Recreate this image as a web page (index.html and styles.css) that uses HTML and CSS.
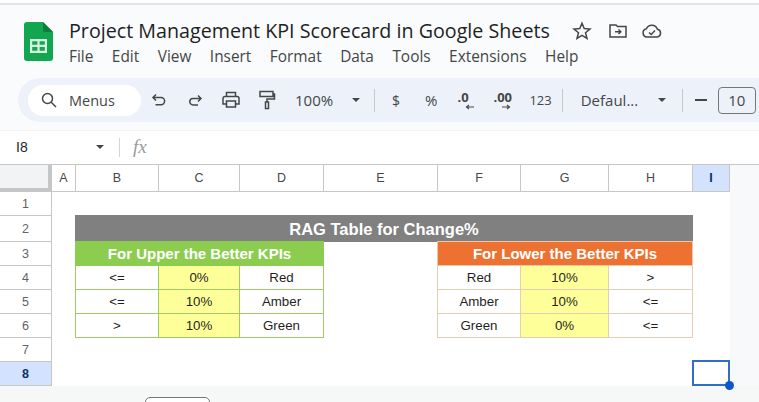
FILE: index.html
```html
<!DOCTYPE html>
<html lang="en">
  <head>
    <meta charset="UTF-8" />
    <meta name="viewport" content="width=device-width, initial-scale=1.0" />
    <title>Project Management KPI Scorecard in Google Sheets</title>
    <link rel="stylesheet" href="styles.css">
  </head>
  <body>
    <div class="app">
      <header class="top-bar">
        <svg class="logo" viewBox="0 0 29 39" width="29" height="39">
          <path d="M3 0H19L29 10V36A3 3 0 0 1 26 39H3A3 3 0 0 1 0 36V3A3 3 0 0 1 3 0Z" fill="#12a650" />
          <path d="M19 0L29 10H21A2 2 0 0 1 19 8Z" fill="#0c7d3c" />
          <path d="M6 17H23V31H6ZM8.2 19.2V22.8H13.4V19.2ZM15.6 19.2V22.8H20.8V19.2ZM8.2 25V28.8H13.4V25ZM15.6 25V28.8H20.8V25Z" fill="#d8f2e0" fill-rule="evenodd" />
        </svg>
        <div class="doc-info">
          <div class="title-row">
            <h1 class="doc-title">Project Management KPI Scorecard in Google Sheets</h1>
            <svg class="title-icon star-icon" viewBox="0 0 20 20" width="20" height="20">
              <path d="M10 2.2L12.2 7.6L18 8L13.5 11.7L15 17.4L10 14.3L5 17.4L6.5 11.7L2 8L7.8 7.6Z" />
            </svg>
            <svg class="title-icon move-icon" viewBox="0 0 20 20" width="20" height="20">
              <path d="M2 4H8L9.5 5.5H18V16H2Z" />
              <path d="M7 10.7H12.5M10.5 8.5L12.8 10.7L10.5 13" />
            </svg>
            <svg class="title-icon cloud-icon" viewBox="0 0 22 20" width="22" height="20">
              <path d="M6 16A4.2 4.2 0 0 1 5.4 7.7A6 6 0 0 1 16.4 8.2A4 4 0 0 1 16.5 16Z" />
              <path d="M8 11.5L10.2 13.5L14 9.6" />
            </svg>
          </div>
          <nav class="menu-row">
            <span>File</span>
            <span>Edit</span>
            <span>View</span>
            <span>Insert</span>
            <span>Format</span>
            <span>Data</span>
            <span>Tools</span>
            <span>Extensions</span>
            <span>Help</span>
          </nav>
        </div>
      </header>

      <div class="toolbar">
        <div class="search-pill">
          <svg class="tool-svg" viewBox="0 0 18 18" width="18" height="18">
            <circle cx="7.5" cy="7.5" r="5" />
            <path d="M11.2 11.2L16 16" />
          </svg>
          <span>Menus</span>
        </div>
        <div class="tool-btn">
          <svg class="tool-svg" viewBox="0 0 16 16" width="16" height="16">
            <path d="M5 2.5L2 5.5L5 8.5M2 5.5H10A3.6 3.6 0 0 1 10 12.7H4.5" />
          </svg>
        </div>
        <div class="tool-btn">
          <svg class="tool-svg" viewBox="0 0 16 16" width="16" height="16">
            <path d="M11 3.5L14 6.5L11 9.5M14 6.5H6A3.2 3.2 0 0 0 6 12.9H11" />
          </svg>
        </div>
        <div class="tool-btn">
          <svg class="tool-svg" viewBox="0 0 20 20" width="20" height="20">
            <path d="M5.5 6.5V2.5H14.5V6.5M5.5 14H2V8.5A2 2 0 0 1 4 6.5H16A2 2 0 0 1 18 8.5V14H14.5" />
            <path d="M5.5 11H14.5V17H5.5Z" />
          </svg>
        </div>
        <div class="tool-btn">
          <svg class="tool-svg" viewBox="0 0 20 20" width="20" height="20">
            <path d="M3 1.5H16V6.5H3ZM16 4H17.5V9H10V12" />
            <path d="M8.5 12H11.5V18.5H8.5Z" />
          </svg>
        </div>
        <span class="tool-text zoom-val">100%</span>
        <span class="caret zoom-caret"></span>
        <span class="tool-sep sep-first"></span>
        <span class="tool-text fmt dollar">$</span>
        <span class="tool-text percent">%</span>
        <span class="decimal dec-less">.0
          <svg class="dec-arrow" viewBox="0 0 10 6" width="10" height="6">
            <path d="M9 3H2M4 1L1.5 3L4 5" />
          </svg>
        </span>
        <span class="decimal dec-more">.00
          <svg class="dec-arrow" viewBox="0 0 10 6" width="10" height="6">
            <path d="M1 3H8M6 1L8.5 3L6 5" />
          </svg>
        </span>
        <span class="tool-text num-fmt">123</span>
        <span class="tool-sep sep-second"></span>
        <span class="tool-text font-name">Defaul...</span>
        <span class="caret font-caret"></span>
        <span class="tool-sep sep-third"></span>
        <span class="minus"></span>
        <span class="size-box">10</span>
      </div>

      <div class="formula-bar">
        <div class="name-box">I8</div>
        <span class="caret name-caret"></span>
        <span class="formula-sep"></span>
        <span class="fx">fx</span>
      </div>

      <div class="sheet-area">
        <div class="sheet">
          <div class="corner"></div>
          <div class="col-head">A</div>
          <div class="col-head">B</div>
          <div class="col-head">C</div>
          <div class="col-head">D</div>
          <div class="col-head">E</div>
          <div class="col-head">F</div>
          <div class="col-head">G</div>
          <div class="col-head">H</div>
          <div class="col-head col-active">I</div>

          <div class="row-head">1</div>
          <div class="blank wide"></div>

          <div class="row-head">2</div>
          <div class="blank"></div>
          <div class="rag-title">RAG Table for Change%</div>
          <div class="blank"></div>

          <div class="row-head">3</div>
          <div class="blank"></div>
          <div class="band band-green">For Upper the Better KPIs</div>
          <div class="blank"></div>
          <div class="band band-orange">For Lower the Better KPIs</div>
          <div class="blank"></div>

          <div class="row-head">4</div>
          <div class="blank"></div>
          <div class="cell g first">&lt;=</div>
          <div class="cell g y">0%</div>
          <div class="cell g">Red</div>
          <div class="blank"></div>
          <div class="cell o first">Red</div>
          <div class="cell o y">10%</div>
          <div class="cell o">&gt;</div>
          <div class="blank"></div>

          <div class="row-head">5</div>
          <div class="blank"></div>
          <div class="cell g first">&lt;=</div>
          <div class="cell g y">10%</div>
          <div class="cell g">Amber</div>
          <div class="blank"></div>
          <div class="cell o first">Amber</div>
          <div class="cell o y">10%</div>
          <div class="cell o">&lt;=</div>
          <div class="blank"></div>

          <div class="row-head">6</div>
          <div class="blank"></div>
          <div class="cell g first">&gt;</div>
          <div class="cell g y">10%</div>
          <div class="cell g">Green</div>
          <div class="blank"></div>
          <div class="cell o first">Green</div>
          <div class="cell o y">0%</div>
          <div class="cell o">&lt;=</div>
          <div class="blank"></div>

          <div class="row-head">7</div>
          <div class="blank wide"></div>

          <div class="row-head row-active">8</div>
          <div class="blank wide"></div>

          <div class="selection"><span class="handle"></span></div>
        </div>
      </div>

      <div class="bottom-bar">
        <div class="sheet-tab"></div>
      </div>
    </div>
  </body>
</html>
```

FILE: styles.css
```css
/* Sheets window */
* {
  box-sizing: border-box;
}

body {
  margin: 0;
  width: 759px;
  height: 402px;
  overflow: hidden;
  background: #f9fbfd;
  font-family: "Open Sans", Arial, sans-serif;
  color: #444746;
}

.app {
  display: flex;
  flex-direction: column;
  height: 402px;
  border-top: 3px solid #fff;
}

/* title and menus */
.top-bar {
  display: flex;
  height: 75px;
  padding: 14px 0 0 24px;
  border-top: 2px solid #e3e3e3;
}

.logo {
  flex: none;
  margin-top: 3px;
}

.doc-info {
  margin-left: 16px;
}

.title-row {
  display: flex;
  align-items: center;
  height: 24px;
}

.doc-title {
  flex: none;
  margin: 0;
  width: 481px;
  font-size: 19.7px;
  font-weight: 400;
  line-height: 24px;
  white-space: nowrap;
  color: #1f1f1f;
}

.title-icon {
  flex: none;
  fill: none;
  stroke: #444746;
  stroke-width: 1.5;
}

.star-icon {
  margin-left: 22px;
}

.move-icon {
  margin-left: 16px;
}

.cloud-icon {
  margin-left: 13px;
}

.menu-row {
  display: flex;
  gap: 18.5px;
  margin-top: 4px;
  font-size: 15.4px;
  line-height: 20px;
}

/* toolbar */
.toolbar {
  display: flex;
  align-items: center;
  flex: none;
  height: 44px;
  margin-left: 18px;
  padding-left: 10px;
  background: #edf2fa;
  border-radius: 22px 0 0 22px;
}

.search-pill {
  display: flex;
  align-items: center;
  gap: 11px;
  width: 113px;
  height: 31px;
  padding-left: 12px;
  background: #fff;
  border-radius: 16px;
  font-size: 14.5px;
}

.tool-svg {
  fill: none;
  stroke: #444746;
  stroke-width: 1.5;
}

.tool-btn {
  display: flex;
  align-items: center;
  justify-content: center;
  flex: none;
  width: 36px;
}

.tool-text {
  flex: none;
  font-size: 14px;
}

.zoom-val {
  width: 42px;
  margin-left: 10px;
  font-size: 15px;
}

.caret {
  flex: none;
  width: 0;
  height: 0;
  border-left: 4.5px solid transparent;
  border-right: 4.5px solid transparent;
  border-top: 4.5px solid #444746;
}

.zoom-caret {
  margin-left: 15px;
}

.tool-sep {
  flex: none;
  width: 1px;
  height: 23px;
  background: #c7c7c7;
}

.sep-first {
  margin-left: 14px;
}

.fmt {
  font-weight: 500;
}

.dollar {
  margin-left: 17px;
}

.percent {
  margin-left: 25px;
  font-size: 15px;
}

.decimal {
  position: relative;
  flex: none;
  width: 18px;
  margin-bottom: 6px;
  font-size: 13px;
  font-weight: 700;
  line-height: 14px;
}

.dec-less {
  margin-left: 20px;
}

.dec-more {
  margin-left: 18px;
}

.dec-arrow {
  position: absolute;
  right: 0;
  top: 14px;
  fill: none;
  stroke: #444746;
  stroke-width: 1.2;
}

.num-fmt {
  margin-left: 18px;
  font-size: 13px;
}

.sep-second {
  margin-left: 10px;
}

.font-name {
  width: 62px;
  margin-left: 18px;
  font-size: 15px;
}

.font-caret {
  margin-left: 15px;
}

.sep-third {
  margin-left: 16px;
}

.minus {
  flex: none;
  width: 12px;
  height: 2px;
  margin-left: 12px;
  background: #444746;
}

.size-box {
  flex: none;
  width: 38px;
  height: 27px;
  margin-left: 11px;
  border: 1px solid #747775;
  border-radius: 4px;
  font-size: 15px;
  line-height: 25px;
  text-align: center;
}

/* name box row */
.formula-bar {
  display: flex;
  align-items: center;
  flex: none;
  height: 35px;
  margin-top: 8px;
  padding-bottom: 1px;
  background: #fff;
  border-top: 1px solid #f2f2f2;
  border-bottom: 1px solid #c7c7c7;
}

.name-box {
  width: 96px;
  padding-left: 16px;
  font-family: "Liberation Sans", Arial, sans-serif;
  font-size: 14px;
  color: #1f1f1f;
}

.name-caret {
  margin-right: 15px;
}

.formula-sep {
  width: 1px;
  height: 19px;
  background: #d5d5d5;
}

.fx {
  margin-left: 13px;
  font-family: "Liberation Serif", serif;
  font-size: 19px;
  font-style: italic;
  color: #9a9a9a;
}

/* grid */
.sheet-area {
  flex: none;
  height: 221px;
  background: #f8f9fa;
}

.sheet {
  position: relative;
  display: grid;
  grid-template-columns: 52px 24px 83px 81px 84px 114px 83px 88px 84px 37px;
  grid-template-rows: 27px 24px 26px 24px 24px 24px 24px 24px 24px;
  width: 730px;
  background: #fff;
  font-family: "Liberation Sans", Arial, sans-serif;
  font-size: 13.3px;
  color: #1f1f1f;
}

.corner {
  background: #f1f3f4;
  border-right: 4px solid #c4c7c5;
  border-bottom: 4px solid #c4c7c5;
}

.col-head {
  display: flex;
  align-items: center;
  justify-content: center;
  background: #fff;
  border-right: 1px solid #c7c7c7;
  border-bottom: 1px solid #c7c7c7;
  font-size: 12.5px;
  color: #444746;
}

.row-head {
  display: flex;
  align-items: center;
  justify-content: center;
  grid-column: 1;
  background: #fff;
  border-right: 1px solid #c7c7c7;
  border-bottom: 1px solid #c7c7c7;
  font-size: 12.5px;
  color: #5f6368;
}

.col-active,
.row-active {
  background: #d3e3fd;
  color: #0b2f66;
  font-weight: 700;
}

.blank {
  background: #fff;
}

.wide {
  grid-column: 2 / -1;
}

/* the coloured cells sit over the grid line left of and above them */
.rag-title {
  display: flex;
  align-items: center;
  justify-content: center;
  grid-column: 3 / 10;
  margin: -1px 0 0 -1px;
  padding-top: 1px;
  background: #808080;
  font-size: 16.5px;
  font-weight: 700;
  color: #fff;
}

.band {
  display: flex;
  align-items: center;
  justify-content: center;
  grid-column: span 3;
  margin: -1px 0 0 -1px;
  font-size: 15px;
  font-weight: 700;
  color: #fff;
}

.band-green {
  background: #8ccc4f;
}

.band-orange {
  background: #ed7232;
  border: 1px solid #f0c4a6;
}

.cell {
  display: flex;
  align-items: center;
  justify-content: center;
  background: #fff;
  border-width: 0 1px 1px 0;
  border-style: solid;
}

.cell.first {
  margin-left: -1px;
  border-left-width: 1px;
}

.cell.g {
  border-color: #9ccc65;
}

.cell.o {
  border-color: #e8cdb6;
}

.cell.y {
  background: #ffff99;
}

/* selected cell I8 */
.selection {
  position: absolute;
  left: 692px;
  top: 195px;
  width: 38px;
  height: 26px;
  border: 2px solid #2f6fc4;
}

.handle {
  position: absolute;
  right: -6px;
  bottom: -6px;
  width: 9px;
  height: 9px;
  background: #0b57d0;
  border-radius: 50%;
}

/* sheet tabs */
.bottom-bar {
  flex: 1;
  padding-left: 145px;
  padding-top: 11px;
  background: #f6f8f7;
  overflow: hidden;
}

.sheet-tab {
  width: 65px;
  height: 20px;
  background: #fff;
  border: 1px solid #747775;
  border-radius: 5px;
}
```
